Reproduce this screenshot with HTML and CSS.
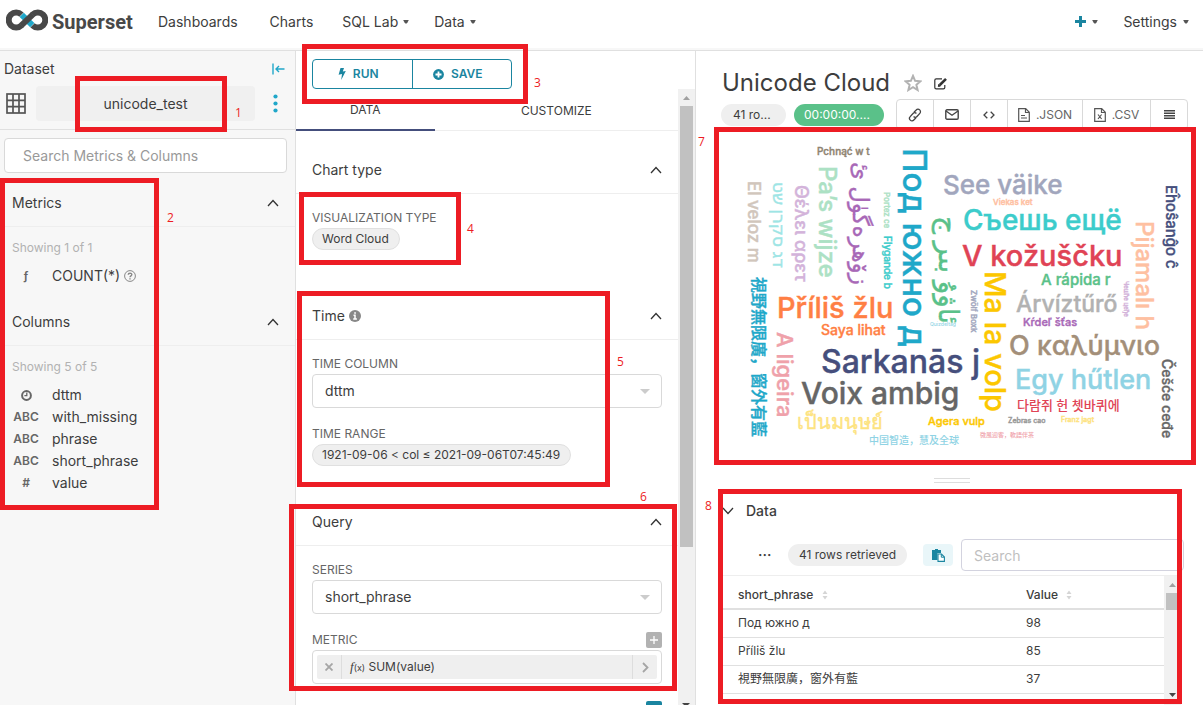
FILE: index.html
```html
<!DOCTYPE html>
<html lang="en">
<head>
<meta charset="utf-8">
<title>Unicode Cloud - Superset</title>
<link rel="stylesheet" href="styles.css">
</head>
<body>
<svg class="defs" width="0" height="0" aria-hidden="true">
  <symbol id="chev-up" viewBox="0 0 12 8"><path d="M1 7 6 1.500 11 7" fill="none" stroke="#333" stroke-width="1.300"/></symbol>
  <symbol id="caret" viewBox="0 0 6 4"><path d="M0.200 0h5.600L4.500 2.500 3.600 3.500H2.400L1.500 2.500z" fill="#555"/></symbol>
  <symbol id="tri-up" viewBox="0 0 8 5"><path d="M0 5 4 0 8 5z"/></symbol>
  <symbol id="tri-down" viewBox="0 0 8 5"><path d="M0 0 4 5 8 0z"/></symbol>
</svg>
<header class="topbar">
  <a class="brand" href="#">
    <svg width="42" height="22" viewBox="0 0 42 22" fill="none" stroke-width="6" aria-hidden="true">
      <path d="M15.500 5.700A7.500 7.500 0 1 0 15.500 16.300M26.500 5.700A7.500 7.500 0 1 1 26.500 16.300" stroke="#484848"/>
      <path d="M15.700 5.900 26.300 16.100" stroke="#20a7c9"/>
      <path d="M15.100 16.700 26.900 5.300" stroke="#484848"/>
    </svg>
    <span>Superset</span>
  </a>
  <nav class="menu">
    <a href="#">Dashboards</a>
    <a href="#">Charts</a>
    <a href="#">SQL Lab <svg width="6" height="4"><use href="#caret"/></svg></a>
    <a href="#">Data <svg width="6" height="4"><use href="#caret"/></svg></a>
  </nav>
  <nav class="menu-right">
    <a href="#" aria-label="New"><svg width="11" height="11" viewBox="0 0 11 11"><path d="M5.500 0v11M0 5.500h11" stroke="#1a85a0" stroke-width="3"/></svg><svg width="6" height="4"><use href="#caret"/></svg></a>
    <a href="#">Settings <svg width="6" height="4"><use href="#caret"/></svg></a>
  </nav>
</header>
<main class="explore">
  <aside class="dataset">
    <div class="dataset-title">
      <span>Dataset</span>
      <button class="bare" aria-label="Collapse"><svg width="13" height="12" viewBox="0 0 13 12" fill="none" stroke="#20a7c9" stroke-width="1.400"><path d="M1 0.500v11M12.500 6H4M7 3 4 6l3 3"/></svg></button>
    </div>
    <div class="dataset-row">
      <svg width="20" height="21" viewBox="0 0 20 21" fill="none" stroke="#555" stroke-width="1.700"><rect x="1" y="1" width="18" height="19"/><path d="M7 1v19M13 1v19M1 7.300h18M1 13.700h18"/></svg>
      <button class="dataset-name">unicode_test</button>
      <button class="bare dots" aria-label="More"><svg width="5" height="19" viewBox="0 0 5 19" fill="#20a7c9"><circle cx="2.500" cy="2.500" r="2.100"/><circle cx="2.500" cy="9.500" r="2.100"/><circle cx="2.500" cy="16.500" r="2.100"/></svg></button>
    </div>
    <div class="dataset-body">
      <input class="search-metrics" type="text" placeholder="Search Metrics &amp; Columns" aria-label="Search Metrics and Columns">
      <button class="group-head"><span>Metrics</span><svg width="12" height="8"><use href="#chev-up"/></svg></button>
      <p class="showing">Showing 1 of 1</p>
      <ul class="fields metrics">
        <li><b class="fn">ƒ</b><span>COUNT(*)</span>
          <svg width="12" height="12" viewBox="0 0 12 12" fill="none" stroke="#888"><circle cx="6" cy="6" r="5.400"/><path d="M4.200 4.800C4.200 2.600 7.900 2.700 7.800 4.700 7.700 5.900 6 5.800 6 7.300M6 8.200v1.300" stroke-width="1.400"/></svg></li>
      </ul>
      <button class="group-head"><span>Columns</span><svg width="12" height="8"><use href="#chev-up"/></svg></button>
      <p class="showing">Showing 5 of 5</p>
      <ul class="fields">
        <li><b><svg width="11" height="11" viewBox="0 0 11 11" fill="none" stroke="#666"><circle cx="5.500" cy="5.500" r="4.400" stroke-width="2"/><path d="M5.800 2.500v3.200H3.400" stroke-width="1.300"/></svg></b><span>dttm</span></li>
        <li><b>ABC</b><span>with_missing</span></li>
        <li><b>ABC</b><span>phrase</span></li>
        <li><b>ABC</b><span>short_phrase</span></li>
        <li><b>#</b><span>value</span></li>
      </ul>
    </div>
  </aside>

  <section class="controls">
    <div class="actions">
      <button><svg width="8" height="12" viewBox="0 0 8 12" fill="#1a85a0"><path d="M2.500 0H6L4.800 3.600 7.800 3 3.200 12 4 6 .600 6.700z"/></svg>RUN</button>
      <button><svg width="11" height="11" viewBox="0 0 11 11"><circle cx="5.500" cy="5.500" r="5.400" fill="#1a85a0"/><path d="M5.500 2.500v6M2.500 5.500h6" stroke="#fff" stroke-width="1.800"/></svg>SAVE</button>
    </div>
    <div class="control-area">
      <div class="control-scroll">
        <div class="tabs" role="tablist">
          <button role="tab" aria-selected="true" class="active">DATA</button>
          <button role="tab" aria-selected="false">CUSTOMIZE</button>
        </div>
        <section class="block first">
          <button class="block-head"><span>Chart type</span><svg width="12" height="8"><use href="#chev-up"/></svg></button>
          <div class="block-body">
            <div class="label">VISUALIZATION TYPE</div>
            <button class="pill outlined">Word Cloud</button>
          </div>
        </section>
        <section class="block second">
          <button class="block-head"><span>Time <svg width="12" height="12" viewBox="0 0 12 12"><circle cx="6" cy="6" r="6" fill="#888"/><path d="M4.500 5.200h1.500v3.600M4.200 9h3.700M5.200 3h1.700" fill="none" stroke="#fff" stroke-width="1.500"/></svg></span><svg width="12" height="8"><use href="#chev-up"/></svg></button>
          <div class="block-body">
            <label class="label" for="timecol">TIME COLUMN</label>
            <div class="select"><select id="timecol"><option>dttm</option></select><svg width="10" height="5" viewBox="0 0 8 5" preserveAspectRatio="none" fill="#ccc"><use href="#tri-down" width="8" height="5"/></svg></div>
            <div class="label">TIME RANGE</div>
            <button class="pill outlined">1921-09-06 &lt; col ≤ 2021-09-06T07:45:49</button>
          </div>
        </section>
        <section class="block">
          <button class="block-head"><span>Query</span><svg width="12" height="8"><use href="#chev-up"/></svg></button>
          <div class="block-body">
            <label class="label" for="series">SERIES</label>
            <div class="select"><select id="series"><option>short_phrase</option></select><svg width="10" height="5" viewBox="0 0 8 5" preserveAspectRatio="none" fill="#ccc"><use href="#tri-down" width="8" height="5"/></svg></div>
            <div class="label with-add"><span>METRIC</span><button class="add" aria-label="Add metric"><svg width="8" height="8" viewBox="0 0 8 8"><path d="M4 0v8M0 4h8" stroke="#fff" stroke-width="1.300"/></svg></button></div>
            <div class="metric-box"><div class="metric">
              <button class="bare" aria-label="Remove"><svg width="8" height="8" viewBox="0 0 8 8"><path d="M.500.500l7 7M7.500.500l-7 7" stroke="#a5a5a5" stroke-width="1.800"/></svg></button>
              <span class="metric-name"><i>f</i><small>(x)</small> SUM(value)</span>
              <button class="bare" aria-label="Edit"><svg width="7" height="11" viewBox="0 0 7 11"><path d="M1 1l4.500 4.500L1 10" fill="none" stroke="#a5a5a5" stroke-width="1.800"/></svg></button>
            </div></div>
            <div class="next"><button class="add teal" aria-label="Add filter"></button></div>
          </div>
        </section>
      </div>
      <div class="scrollbar">
        <svg width="7" height="4" viewBox="0 0 8 5" preserveAspectRatio="none" fill="#a0a0a0"><use href="#tri-up" width="8" height="5"/></svg>
        <div class="thumb"></div>
        <svg width="8" height="4" viewBox="0 0 8 5" preserveAspectRatio="none" fill="#444"><use href="#tri-down" width="8" height="5"/></svg>
      </div>
    </div>
  </section>

  <section class="chart">
    <div class="chart-title">
      <h1>Unicode Cloud</h1>
      <svg width="18" height="18" viewBox="0 0 18 18" fill="none" stroke="#b2b2b2" stroke-width="2"><path d="M9 1.900l2.100 4.900 5.300.5-4 3.500 1.200 5.200L9 13.200 4.400 16l1.200-5.200-4-3.500 5.300-.5z"/></svg>
      <svg class="pencil" width="14" height="13" viewBox="0 0 14 13" fill="none" stroke="#333"><path d="M8 1.800H2.200Q.8 1.800.8 3.200v7.200q0 1.400 1.400 1.400h7.200q1.400 0 1.400-1.400V8" stroke-width="1.200"/><path d="M5.800 8 12 1.800" stroke-width="2.600"/><path d="M4.300 9.500l.500-2.200 1.700 1.700z" fill="#333"/></svg>
    </div>
    <div class="chart-tools">
      <span class="pill rows">41 ro...</span>
      <span class="pill timer">00:00:00....</span>
      <div class="tools">
        <button aria-label="Link"><svg width="14" height="14" viewBox="0 0 14 14" fill="none" stroke="#444" stroke-width="1.300"><path d="M6 4.200 8.200 2a2.300 2.300 0 0 1 3.600 3.400L9 8.500a2.200 2.200 0 0 1-3.400 0"/><path d="M8 9.800 5.800 12A2.300 2.300 0 0 1 2.200 8.600L5 5.500a2.200 2.200 0 0 1 3.400 0"/></svg></button>
        <button aria-label="Email"><svg width="14" height="11" viewBox="0 0 14 11" fill="none" stroke="#444" stroke-width="1.400"><rect x=".8" y=".8" width="12.400" height="9.400" rx="1.200"/><path d="M1 2l6 4.200L13 2"/></svg></button>
        <button aria-label="Embed"><svg width="12" height="8" viewBox="0 0 12 8" fill="none" stroke="#444" stroke-width="1.300"><path d="M4.300.7 1 4l3.300 3.300M7.700.7 11 4 7.700 7.300"/></svg></button>
        <button class="file"><svg width="12" height="14" viewBox="0 0 12 14" fill="none" stroke="#555" stroke-width="1.200"><path d="M.7.700h7L11.300 4.300v9H.7zM7.500.9v3.600h3.600M3 7.500h4M3 10h6"/></svg>.JSON</button>
        <button class="file"><svg width="12" height="14" viewBox="0 0 12 14" fill="none" stroke="#555" stroke-width="1.200"><path d="M.7.700h7L11.300 4.300v9H.7zM7.500.9v3.600h3.600M4 6.500l3.600 4.500M7.600 6.500 4 11"/></svg>.CSV</button>
        <button aria-label="Menu"><svg width="11" height="9" viewBox="0 0 11 9" stroke="#444" stroke-width="1.500"><path d="M0 .8h11M0 3.300h11M0 5.800h11M0 8.300h11"/></svg></button>
      </div>
    </div>
    <svg class="cloud" viewBox="696 130 507 340" role="img" aria-label="Word cloud">
      <g>
        <text x="817" y="155" font-size="10" color="#8f8371">Pchnąć w t</text>
        <text x="943" y="194" font-size="26" color="#a1a6bd">See väike</text>
        <text x="993" y="205" font-size="8" color="#fec0a1">Viekas ket</text>
        <text x="963" y="230" font-size="28" color="#3ccccb">Съешь ещё</text>
        <text x="962" y="266" font-size="29" color="#e04355">V kožuščku</text>
        <text x="1041" y="285" font-size="15" color="#5ac189">A rápida r</text>
        <text x="1016" y="312" font-size="23" color="#b2b2b2">Árvíztűrő</text>
        <text x="1023" y="326" font-size="11" color="#a868b7">Kŕdeľ šťas</text>
        <text x="1009" y="355" font-size="27" color="#a38f79">O καλύμνιο</text>
        <text x="1015" y="389" font-size="27" color="#8fd3e4">Egy hűtlen</text>
        <text x="1017" y="410" font-size="13" color="#e04355" class="thin">다람쥐 헌 쳇바퀴에</text>
        <text x="928" y="425" font-size="11" color="#fcc700">Agera vulp</text>
        <text x="1008" y="423" font-size="7" color="#999">Zebras cao</text>
        <text x="1061" y="422" font-size="7" color="#fde380">Franz jagt</text>
        <text x="980" y="437" font-size="6" color="#efa1aa" class="thin">微風迎客，軟語伴茶</text>
        <text x="869" y="444" font-size="10" color="#8fd3e4" class="thin">中国智造，慧及全球</text>
        <text x="797" y="429" font-size="20" color="#fde380">เป็นมนุษย์</text>
        <text x="801" y="404" font-size="30" color="#666">Voix ambig</text>
        <text x="821" y="373" font-size="32" color="#454e7c">Sarkanās j</text>
        <text x="777" y="318" font-size="29" color="#ff7f44">Příliš žlu</text>
        <text x="821" y="335" font-size="14" color="#ff7f44">Saya lihat</text>
      </g>
      <g>
        <text transform="translate(748 181) rotate(90)" font-size="17" color="#d1c6bc">El veloz m</text>
        <text transform="translate(773 182) rotate(90)" font-size="17" color="#9ee5e5">דג סקרן שט</text>
        <text transform="translate(795 185) rotate(90)" font-size="18" color="#d3b3da">Θέλει αρετ</text>
        <text transform="translate(819 166) rotate(90)" font-size="24" color="#ace1c4">Pa’s wijze</text>
        <text transform="translate(853 162) rotate(90)" font-size="23" color="#a868b7">زۆھرەگۈل ئ</text>
        <text transform="translate(884 192) rotate(90)" font-size="8" color="#ace1c4">Portez ce</text>
        <text transform="translate(884 236) rotate(90)" font-size="10" color="#3ccccb">Flygande b</text>
        <text transform="translate(903 148) rotate(90)" font-size="33" color="#1fa8c9">Под южно д</text>
        <text transform="translate(939 216) rotate(90)" font-size="28" color="#5ac189">ئاۋۇ بىر ج</text>
        <text transform="translate(753 277) rotate(90)" font-size="16" color="#1fa8c9">視野無限廣，窗外有藍</text>
        <text transform="translate(777 332) rotate(90)" font-size="22" color="#efa1aa">A ligeira</text>
        <text transform="translate(971 290) rotate(90)" font-size="8" color="#a1a6bd">Zwölf Boxk</text>
        <text transform="translate(985 271) rotate(90)" font-size="29" color="#fcc700">Ma la volp</text>
        <text transform="translate(1136 221) rotate(90)" font-size="24" color="#fec0a1">Pijamalı h</text>
        <text transform="translate(1124 281) rotate(90)" font-size="6" color="#d3b3da">Чешће цеђе</text>
        <text transform="translate(1166 185) rotate(90)" font-size="15" color="#454e7c">Eĥoŝanĝo ĉ</text>
        <text transform="translate(1162 359) rotate(90)" font-size="14" color="#666">Češće ceđe</text>
        <text x="930" y="326" font-size="5" color="#8fd3e4" class="thin">Quizdeltag</text>
      </g>
    </svg>
    <div class="resizer"></div>
    <div class="data-pane">
      <button class="data-head"><svg width="12" height="8" viewBox="0 0 12 8"><path d="M1 1l5 5.500L11 1" fill="none" stroke="#333" stroke-width="1.300"/></svg><span>Data</span></button>
      <div class="data-tools">
        <span class="more">···</span>
        <span class="pill retrieved">41 rows retrieved</span>
        <button class="copy" aria-label="Copy"><svg width="13" height="13" viewBox="0 0 13 13"><path d="M0 1h3V0h3v1h3v3H5.500v7H0z" fill="#1a85a0"/><path d="M6 5h3.500L12.400 8v4.400H6z" fill="#fff" stroke="#1a85a0" stroke-width="1.100"/><path d="M9.300 5v3.200h3" fill="none" stroke="#1a85a0"/></svg></button>
        <input type="text" placeholder="Search" aria-label="Search rows">
      </div>
      <div class="data-grid">
        <table>
          <thead><tr>
            <th>short_phrase <svg width="6" height="10" viewBox="0 0 6 10" fill="#d5d5d5"><path d="M.500 4 3 .500 5.500 4zM.500 6 3 9.500 5.500 6z"/></svg></th>
            <th>Value <svg width="6" height="10" viewBox="0 0 6 10" fill="#d5d5d5"><path d="M.500 4 3 .500 5.500 4zM.500 6 3 9.500 5.500 6z"/></svg></th>
          </tr></thead>
          <tbody>
            <tr><td>Под южно д</td><td>98</td></tr>
            <tr><td>Příliš žlu</td><td>85</td></tr>
            <tr><td>視野無限廣，窗外有藍</td><td>37</td></tr>
          </tbody>
        </table>
        <div class="scrollbar small">
          <svg width="7" height="4" viewBox="0 0 8 5" preserveAspectRatio="none" fill="#a0a0a0"><use href="#tri-up" width="8" height="5"/></svg>
          <div class="thumb"></div>
          <svg width="7" height="4" viewBox="0 0 8 5" preserveAspectRatio="none" fill="#444"><use href="#tri-down" width="8" height="5"/></svg>
        </div>
      </div>
    </div>
  </section>
</main>
<div class="mark m1"></div><div class="mark m2"></div><div class="mark m3"></div><div class="mark m4"></div>
<div class="mark m5"></div><div class="mark m6"></div><div class="mark m7"></div><div class="mark m8"></div>
<span class="num n1">1</span><span class="num n2">2</span><span class="num n3">3</span><span class="num n4">4</span>
<span class="num n5">5</span><span class="num n6">6</span><span class="num n7">7</span><span class="num n8">8</span>
</body>
</html>
```

FILE: styles.css
```css
* { box-sizing: border-box; }
body {
  margin: 0;
  height: 100vh;
  overflow: hidden;
  display: flex;
  flex-direction: column;
  position: relative;
  background: #f7f7f7;
  color: #3d3d3d;
  font: 14px/20px Inter, "Noto Sans CJK JP", sans-serif;
}
button, input, select { font: inherit; color: inherit; margin: 0; }
button { background: none; border: 0; padding: 0; cursor: pointer; }
a { color: inherit; text-decoration: none; }
svg { flex: none; }
.defs { position: absolute; }
.bare { display: flex; align-items: center; justify-content: center; }

.topbar {
  flex: none;
  height: 51px;
  display: flex;
  align-items: center;
  padding: 0 14px 7px 6px;
  background: linear-gradient(#fff 48px, #f7f7f7 48px);
  border-bottom: 1px solid #e0e0e0;
}
.brand { display: flex; align-items: center; gap: 4px; width: 152px; font: bold 20px/24px Roboto, sans-serif; color: #484848; }
.brand svg { margin-top: -3px; }
.menu { display: flex; flex: 1; }
.menu a { display: flex; align-items: center; gap: 5px; margin-right: 29px; }
.menu a:first-child { margin-right: 32px; }
.menu a:nth-child(3) { margin-right: 25px; }
.menu-right { display: flex; gap: 25px; }
.menu-right a { display: flex; align-items: center; gap: 6px; }

.explore { flex: 1; min-height: 0; display: grid; grid-template-columns: 296px 400px 1fr; }

.dataset { border-right: 1px solid #e0e0e0; background: #f7f7f7; }
.dataset-title { display: flex; justify-content: space-between; padding: 8px 10px 0 4px; }
.dataset-row { display: flex; align-items: center; gap: 10px; padding: 7px 17px 8px 6px; border-bottom: 1px solid #e0e0e0; }
.dataset-name { flex: 1; height: 35px; border-radius: 4px; background: #f0f0f0; }
.dots { margin-left: 8px; }
.dataset-body { padding-top: 8px; }
.search-metrics { display: block; width: calc(100% - 12px); height: 35px; margin: 0 8px 0 4px; padding: 0 18px; border: 1px solid #d9d9d9; border-radius: 4px; background: #fff; outline: 0; }
::placeholder { color: #999; opacity: 1; }
.group-head { display: flex; width: calc(100% - 5px); margin-left: 5px; height: 54px; padding: 7px 16px 0 7px; align-items: center; justify-content: space-between; border-bottom: 1px solid #eee; }
.showing { margin: 12px 12px 8px; font-size: 12px; line-height: 18px; color: #b2b2b2; }
.fields { list-style: none; margin: 0; padding: 0 12px; }
.fields li { display: flex; align-items: center; height: 22px; }
.fields b { width: 28px; margin-right: 12px; display: flex; justify-content: center; font-size: 12px; font-weight: 600; color: #666; }
.metrics { margin-bottom: 5px; }
.metrics svg { margin-left: 4px; }

.controls { display: flex; flex-direction: column; min-height: 0; background: #fff; border-right: 1px solid #e0e0e0; }
.actions { display: flex; margin: 8px 0 0 16px; width: 200px; height: 30px; border: 1px solid #1a85a0; border-radius: 4px; }
.actions button { flex: 1; display: flex; align-items: center; justify-content: center; gap: 7px; padding-right: 8px; color: #1a85a0; font-size: 12px; font-weight: 600; }
.actions button + button { border-left: 1px solid #1a85a0; }
.control-area { flex: 1; display: flex; min-height: 0; }
.control-scroll { flex: 1; overflow: hidden; }
.tabs { display: flex; height: 42px; border-bottom: 1px solid #eee; font-size: 12px; }
.tabs button { width: 139px; height: 42px; padding-top: 2px; }
.tabs button + button { width: 244px; }
.tabs .active { border-bottom: 2px solid #444e7c; }
.block.first { padding-top: 15px; height: 161px; }
.block.second { height: 206px; }
.block-head { display: flex; width: 100%; height: 48px; padding: 0 16px; align-items: center; justify-content: space-between; border-bottom: 1px solid #eee; }
.block-head span svg { vertical-align: -1px; }
.block-body { padding: 15px 16px 0; display: flex; flex-direction: column; align-items: flex-start; }
.label { font-size: 12px; line-height: 18px; margin-bottom: 1px; color: #666; }
.with-add { width: 100%; display: flex; justify-content: space-between; align-items: center; }
.pill { flex: none; height: 22px; padding: 0 10px; border-radius: 11px; background: #efefef; font-size: 12px; line-height: 22px; white-space: nowrap; }
.pill.outlined { padding: 0 10px 0 9px; border: 1px solid #e0e0e0; line-height: 20px; }
.select { position: relative; width: 100%; margin-bottom: 17px; }
.select select { display: block; width: 100%; height: 34px; padding: 0 12px; border: 1px solid #d9d9d9; border-radius: 4px; appearance: none; background: #fff; }
.select svg { position: absolute; right: 12px; top: 15px; }
.add { width: 16px; height: 16px; border-radius: 2px; background: #b2b2b2; display: flex; align-items: center; justify-content: center; }
.teal { background: #1a85a0; }
.metric-box { width: 100%; height: 34px; padding: 4px; border: 1px solid #d9d9d9; border-radius: 4px; }
.metric { display: flex; height: 24px; background: #efefef; border-radius: 2px; font-size: 12px; line-height: 24px; }
.metric .bare { width: 24px; }
.metric-name { flex: 1; padding-left: 8px; border: solid #ddd; border-width: 0 1px; }
.metric-name i { font: italic 13px "Liberation Serif", serif; }
.metric-name small { font-size: 9px; }
.next { width: 100%; display: flex; justify-content: flex-end; margin-top: 17px; }

.scrollbar { width: 17px; display: flex; flex-direction: column; align-items: center; padding: 7px 1px 0 0; background: #f1f1f1; }
.scrollbar .thumb { width: 13px; height: 441px; margin: 6px 0 auto; background: #c1c1c1; }
.scrollbar svg:last-child { margin-bottom: -2px; }

.chart { background: #fff; min-width: 0; display: flex; flex-direction: column; }
.chart-title { display: flex; align-items: center; padding: 17px 26px 0; }
h1 { margin: 0 14px 0 0; font-size: 24px; font-weight: 400; line-height: 30px; }
.pencil { margin-left: 12px; }
.chart-tools { display: flex; align-items: center; height: 31px; margin: 1px 21px 0 25px; }
.rows { width: 65px; padding: 0 12px; margin-right: 8px; }
.timer { width: 90px; margin-right: 12px; background: #5ac189; color: #fff; }
.tools { flex: 1; display: flex; height: 31px; border: 1px solid #d9d9d9; border-radius: 4px; }
.tools button { width: 37px; display: flex; align-items: center; justify-content: center; font-size: 12px; color: #666; }
.tools button:first-child { width: 36px; }
.tools button + button { border-left: 1px solid #d9d9d9; }
.tools .file { width: 75px; gap: 6px; }
.tools .file + .file { width: 68px; }
.tools button:last-child { flex: 1; }
.cloud { display: block; width: 100%; height: auto; font-family: Inter, "DejaVu Sans", "Noto Sans CJK JP", "Noto Sans CJK KR", sans-serif; font-weight: 500; fill: currentColor; stroke-width: 0.4; }
.cloud text { stroke: currentColor; }
.cloud .thin { stroke: none; }
.resizer { width: 36px; height: 5px; margin: 8px auto 0 238px; border: solid #ddd; border-width: 1px 0; flex: none; }
.data-pane { padding: 18px 19px 0 26px; }
.data-head { display: flex; align-items: center; gap: 12px; font-weight: 500; }
.data-tools { display: flex; align-items: center; height: 32px; margin: 18px 0 4px; }
.more { width: 66px; padding-left: 36px; font-weight: 600; }
.retrieved { padding: 0 11px; margin-right: 16px; }
.copy { width: 30px; height: 22px; margin-right: 8px; border-radius: 4px; background: #e9f6f9; display: flex; align-items: center; justify-content: center; }
.data-tools input { flex: 1; min-width: 0; height: 32px; padding: 0 12px; border: 1px solid #d3d3df; border-radius: 4px; outline: 0; }
.data-tools input::placeholder { color: #bfbfbf; }
.data-grid { display: flex; height: 130px; border-top: 1px solid #eee; margin-right: 3px; }
table { flex: 1; border-collapse: collapse; table-layout: fixed; font-size: 12px; height: 118px; }
th, td { text-align: left; padding: 0 16px; height: 28px; border-bottom: 1px solid #e0e0e0; }
th:first-child { width: 288px; }
th { height: 33px; padding-top: 6px; font-weight: 500; border-bottom-width: 2px; }
th svg { margin-left: 5px; vertical-align: -1px; }
.small .thumb { height: 17px; width: 13px; }
.small svg:last-child { margin-bottom: 8px; }

.mark { position: absolute; border: 5px solid #ed1c24; pointer-events: none; }
.m1 { left: 75px; top: 76px; width: 152px; height: 56px; }
.m2 { left: 0; top: 178px; width: 159px; height: 332px; }
.m3 { left: 302px; top: 44px; width: 226px; height: 60px; }
.m4 { left: 299px; top: 192px; width: 162px; height: 73px; }
.m5 { left: 297px; top: 291px; width: 313px; height: 196px; }
.m6 { left: 289px; top: 504px; width: 388px; height: 187px; }
.m7 { left: 714px; top: 127px; width: 482px; height: 338px; }
.m8 { left: 718px; top: 489px; width: 464px; height: 215px; }
.num { position: absolute; font: 12px/16px "Open Sans", sans-serif; color: #ed1c24; }
.n1 { left: 235px; top: 105px; }
.n2 { left: 167px; top: 210px; }
.n3 { left: 534px; top: 75px; }
.n4 { left: 467px; top: 221px; }
.n5 { left: 617px; top: 354px; }
.n6 { left: 640px; top: 489px; }
.n7 { left: 698px; top: 134px; }
.n8 { left: 705px; top: 498px; }
```
